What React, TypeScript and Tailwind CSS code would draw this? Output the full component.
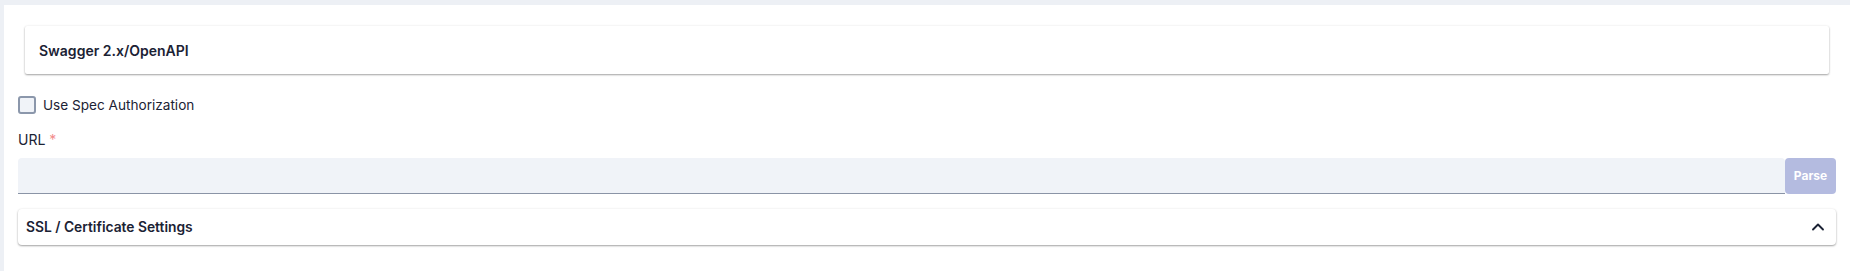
import React, { useState } from 'react';
import { ChevronUp } from 'lucide-react';

export default function App() {
    const [useSpecAuth, setUseSpecAuth] = useState(false);
    const [url, setUrl] = useState('');
    const [sslOpen, setSslOpen] = useState(true);

    return (
        <div className="h-[271px] bg-[#edf0f5] pt-[5px] pl-[4px] font-['Inter',sans-serif] text-[#1b2234]">
            <div className="h-full bg-white px-[14px]">
                {/* Spec type card */}
                <div className="px-[7px] pt-[21px]">
                    <div className="h-[48px] flex items-center px-[14px] bg-white rounded-[2px] shadow-[0_1px_2px_rgba(0,0,0,0.35),0_0_3px_rgba(0,0,0,0.06)]">
                        <span className="text-[14px] font-semibold">Swagger 2.x/OpenAPI</span>
                    </div>
                </div>

                {/* Use spec authorization */}
                <label className="mt-[21px] flex items-center gap-[7px] cursor-pointer">
                    <input
                        type="checkbox"
                        checked={useSpecAuth}
                        onChange={(e) => setUseSpecAuth(e.target.checked)}
                        className="sr-only"
                    />
                    <span className="w-[18px] h-[18px] rounded-[3px] border-2 border-[#8b97ab] bg-[#f0f3f8]" />
                    <span className="text-[13.6px] leading-[20px]">Use Spec Authorization</span>
                </label>

                {/* URL */}
                <div className="mt-[15px] text-[14px] leading-[20px]">
                    URL <span className="text-[#f28b8b]">*</span>
                </div>
                <div className="mt-[8px] flex">
                    <input
                        value={url}
                        onChange={(e) => setUrl(e.target.value)}
                        className="flex-1 h-[36px] bg-[#f0f3f8] border-b border-[#8a94a6] rounded-t-[4px] px-3 text-[14px] outline-none"
                    />
                    <button
                        disabled={!url}
                        className="w-[51px] h-[36px] rounded-[4px] bg-[#b4bbe0] text-white text-[12px] font-bold"
                    >
                        Parse
                    </button>
                </div>

                {/* SSL settings */}
                <button
                    onClick={() => setSslOpen(!sslOpen)}
                    className="mt-[15px] w-full h-[36px] flex items-center justify-between pl-[8px] pr-[8px] bg-white rounded-[4px] shadow-[0_1px_2px_rgba(0,0,0,0.35),0_0_3px_rgba(0,0,0,0.06)]"
                >
                    <span className="text-[13.8px] font-semibold">SSL / Certificate Settings</span>
                    <ChevronUp size={20} strokeWidth={2.25} className={sslOpen ? '' : 'rotate-180'} />
                </button>
            </div>
        </div>
    );
}
